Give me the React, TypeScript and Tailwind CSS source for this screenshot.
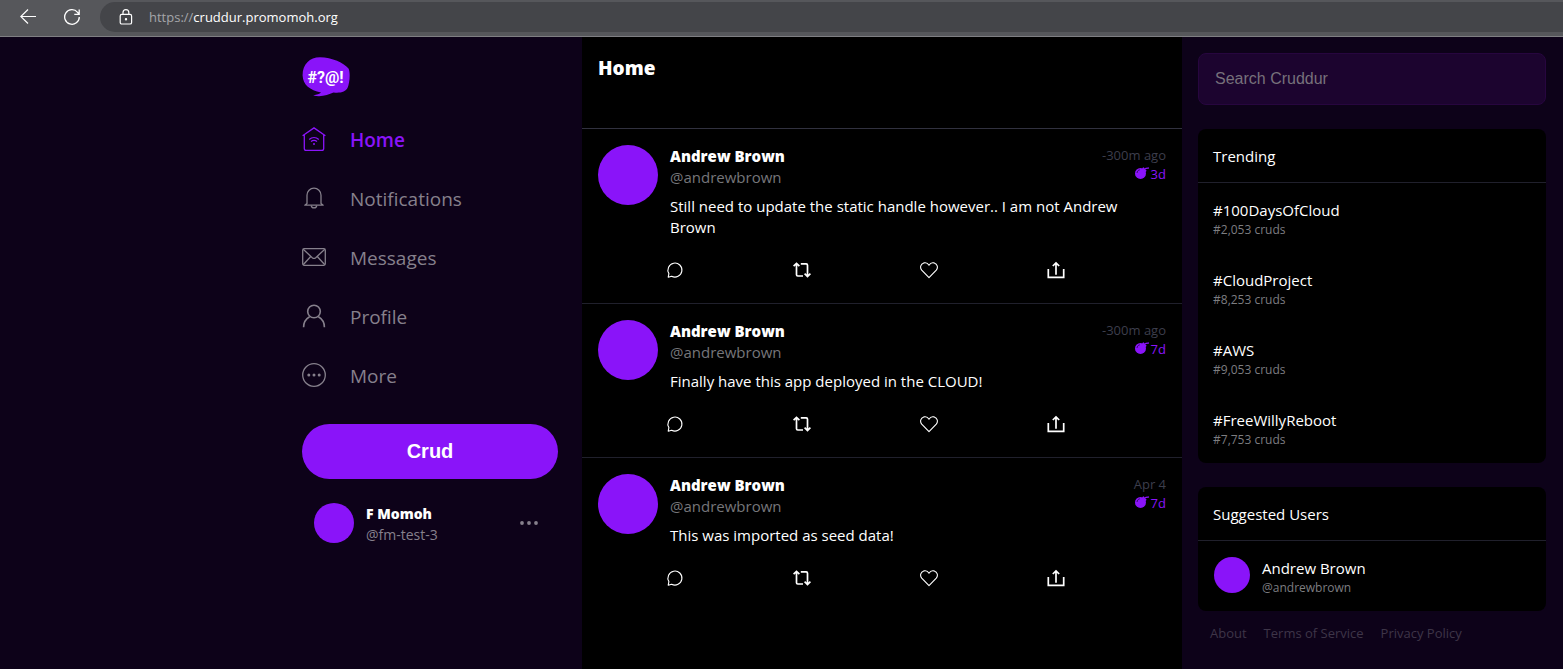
import type { ReactNode } from 'react';

const posts = [
  { id: 1, message: 'Still need to update the static handle however.. I am not Andrew Brown', ago: '-300m ago', expires: '3d' },
  { id: 2, message: 'Finally have this app deployed in the CLOUD!', ago: '-300m ago', expires: '7d' },
  { id: 3, message: 'This was imported as seed data!', ago: 'Apr 4', expires: '7d' },
];

const trends = [
  { tag: '#100DaysOfCloud', count: '2,053' },
  { tag: '#CloudProject', count: '8,253' },
  { tag: '#AWS', count: '9,053' },
  { tag: '#FreeWillyReboot', count: '7,753' },
];

function BrowserBar() {
  return (
    <header className="flex h-[37px] shrink-0 items-start border-b border-[#7f7f83] bg-[#56575b] pt-[2px] text-white">
      <button aria-label="Back" className="ml-5 mt-[7px]">
        <svg className="size-4" viewBox="0 0 16 16" fill="none" stroke="currentColor" strokeWidth="1.2">
          <path d="M16 7.5H.8M8 .5l-7.2 7L8 14.5" />
        </svg>
      </button>
      <button aria-label="Refresh" className="ml-7 mt-[7px]">
        <svg className="size-4" viewBox="0 0 16 16" fill="none" stroke="currentColor" strokeWidth="1.3">
          <path d="M15.3 8A7.3 7.3 0 1 1 13.6 3.3L15 5.2M15.2.5v4.9h-4.9" />
        </svg>
      </button>
      <div className="ml-5 flex h-[30px] flex-1 items-center rounded-l-full bg-[#444549] pl-[19px] text-[13px]">
        <svg className="h-4 w-[14px]" viewBox="0 0 14 16" fill="none" stroke="currentColor" strokeWidth="1.2">
          <rect x="1.2" y="5.4" width="11.4" height="9.6" rx="1.6" />
          <path d="M4 5.4V3.6a2.9 2.9 0 0 1 5.8 0v1.8" />
          <circle cx="7" cy="10.2" r=".6" fill="currentColor" />
        </svg>
        <span className="ml-4 pt-px text-[#a5a6a9]">
          https://<span className="text-white">cruddur.promomoh.org</span>
        </span>
      </div>
    </header>
  );
}

function Logo() {
  return (
    <svg className="h-10 w-12" viewBox="0 0 48 40" role="img" aria-label="Cruddur">
      <path
        d="M.6 18.500C.4 7.500 7.500.4 18 .3 30 .4 42 6 46.500 11.500 48.500 15 47.800 26 45.500 31 43.500 34.800 39 36.200 31.500 35.500 26 37.800 19 40.600 11.200 38.400 15 37.800 17.500 36.800 19 35.500 8 33 .9 28 .6 18.500Z"
        fill="#8a14f9"
      />
      <text x="23.500" y="25.500" textAnchor="middle" fill="white" className="font-['Roboto',sans-serif] text-[16px] font-bold">
        #?@!
      </text>
    </svg>
  );
}

const navIcons: Record<string, ReactNode> = {
  Home: (
    <>
      <path d="M.6 8.800 12 .9l11.400 7.900M2.300 8v13.400c0 1.200.7 1.900 1.900 1.900h15.600c1.200 0 1.900-.7 1.900-1.900V8" />
      <path d="M7.200 12.400c2.800-2.400 6.800-2.400 9.600 0M9 14.600c1.800-1.400 4.200-1.400 6 0" />
      <circle cx="12" cy="17" r="1" fill="currentColor" stroke="none" />
    </>
  ),
  Notifications: (
    <>
      <path d="M5 17.500V9.200a7 7 0 0 1 14 0v8.300l2.200 1.700H2.800L5 17.500Z" strokeLinejoin="round" />
      <path d="M9.300 19.400c0 3.300 5.400 3.300 5.400 0" />
    </>
  ),
  Messages: (
    <>
      <rect x=".7" y="3.700" width="22.600" height="16.600" rx="1.500" />
      <path d="m1.200 4.300 9.100 8.400c1.200 1 2.200 1 3.400 0l9.100-8.400M1.200 19.700l7.300-8M22.800 19.700l-7.300-8" />
    </>
  ),
  Profile: (
    <>
      <circle cx="12" cy="7.500" r="6.300" strokeWidth="1.600" />
      <path d="M1.600 23.200c0-4.700 2.400-8.300 6-10.400M22.400 23.200c0-4.700-2.400-8.300-6-10.400" strokeWidth="1.600" />
    </>
  ),
  More: (
    <>
      <circle cx="12" cy="12" r="11.300" />
      <g fill="currentColor" stroke="none">
        <circle cx="6.800" cy="12" r="1.500" />
        <circle cx="12" cy="12" r="1.500" />
        <circle cx="17.200" cy="12" r="1.500" />
      </g>
    </>
  ),
};

function Sidebar() {
  return (
    <aside className="flex flex-1 justify-end pr-6">
      <div className="w-64 pt-5">
        <Logo />
        <nav className="mt-[14px]">
          {Object.entries(navIcons).map(([label, icon]) => (
            <a
              key={label}
              href="#"
              className={`flex h-[59px] items-center gap-6 text-[19px] ${label === 'Home' ? 'font-semibold text-[#8a14f9]' : 'text-[#86808c]'}`}
            >
              <svg className="mb-[3px] size-6" viewBox="0 0 24 24" fill="none" stroke="currentColor" strokeWidth="1.300">
                {icon}
              </svg>
              {label}
            </a>
          ))}
        </nav>
        <button className="mt-[18px] h-[55px] w-full rounded-full bg-[#8a14f9] pb-[2px] font-['Liberation_Sans',sans-serif] text-xl font-bold text-white">
          Crud
        </button>
        <div className="mt-6 flex items-start pl-3 pr-5">
          <div className="size-10 rounded-full bg-[#8a14f9]" />
          <div className="ml-3 flex-1 text-sm leading-[21px]">
            <div className="font-extrabold text-white">F Momoh</div>
            <div className="text-[#86808c]">@fm-test-3</div>
          </div>
          <button aria-label="Account options" className="flex h-10 items-center text-[#86808c]">
            <svg className="h-1 w-[18px]" viewBox="0 0 18 4" fill="currentColor">
              <circle cx="2" cy="2" r="1.900" />
              <circle cx="9" cy="2" r="1.900" />
              <circle cx="16" cy="2" r="1.900" />
            </svg>
          </button>
        </div>
      </div>
    </aside>
  );
}

const actions: { label: string; icon: ReactNode }[] = [
  {
    label: 'Reply',
    icon: <path d="M2.200 16.200 2.900 12.600A7 7 0 1 1 5.600 15.200Z" strokeWidth="1.100" strokeLinejoin="round" />,
  },
  {
    label: 'Repost',
    icon: <path d="M.6 5.200 3.500 2.400 6.400 5.200M3.500 2.700v11c0 .9.500 1.300 1.300 1.300H10M17.400 12.700l-2.900 2.800-2.900-2.800M14.500 15.100V4.200c0-.9-.5-1.300-1.300-1.300H7.800" strokeWidth="1.700" />,
  },
  {
    label: 'Like',
    icon: <path d="M9 16.700 1.700 9.200C-.4 6.600.7 2.900 3.800 1.900 6 1.300 7.900 2.200 9 4.200c1.100-2 3-2.900 5.200-2.300 3.100 1 4.200 4.700 2.100 7.300Z" strokeWidth="1.100" strokeLinejoin="round" />,
  },
  {
    label: 'Share',
    icon: <path d="M1.300 8v8.300h15.400V8M9 13.800V2.200M5.800 5 9 1.900 12.200 5" strokeWidth="1.700" />,
  },
];

function Bomb() {
  return (
    <svg className="mb-1 h-3 w-[14px]" viewBox="0 0 14 12" fill="none">
      <circle cx="5.500" cy="6.400" r="5.500" fill="#8a14f9" />
      <path d="M7 1.300 8.600.2l2.900 3.200-.7 1.800Z" fill="#8a14f9" />
      <path d="M10 1.900c1-1 2.200-.8 3.900-.9" stroke="#8a14f9" strokeWidth="1.300" />
      <path d="M2 6c.3-1.800 1.200-2.800 2.800-3.200" stroke="#30075a" strokeWidth=".9" />
    </svg>
  );
}

function Post({ message, ago, expires }: { message: string; ago: string; expires: string }) {
  return (
    <article className="flex gap-3 border-b border-[#20202c] p-4 last:border-b-0">
      <div className="size-[60px] shrink-0 rounded-full bg-[#8a14f9]" />
      <div className="min-w-0 flex-1 pt-px text-[15px] leading-[21px]">
        <div className="flex justify-between">
          <div>
            <div className="font-extrabold text-white">Andrew Brown</div>
            <div className="text-[#76767a]">@andrewbrown</div>
          </div>
          <div className="text-right text-[13px] leading-[19px]">
            <div className="text-[#3d3e4c]">{ago}</div>
            <div className="flex items-center justify-end gap-[2px] text-[#8a14f9]">
              <Bomb />
              {expires}
            </div>
          </div>
        </div>
        <p className="mt-2 text-white">{message}</p>
        <div className="-ml-3 mt-[15px] grid grid-cols-4 text-white">
          {actions.map(({ label, icon }) => (
            <button key={label} aria-label={label} className="p-2">
              <svg className="size-[18px]" viewBox="0 0 18 18" fill="none" stroke="currentColor">
                {icon}
              </svg>
            </button>
          ))}
        </div>
      </div>
    </article>
  );
}

function Panel({ title, children }: { title: string; children: ReactNode }) {
  return (
    <section className="mt-6 rounded-lg bg-black text-[15px] text-white">
      <h2 className="border-b border-[#20202c] px-[15px] pb-[15px] pt-[17px] leading-[21px]">{title}</h2>
      {children}
    </section>
  );
}

function RightRail() {
  return (
    <aside className="w-[381px] shrink-0 py-4 pl-4 pr-[17px]">
      <input
        type="search"
        aria-label="Search Cruddur"
        placeholder="Search Cruddur"
        className="block h-[52px] w-full rounded-lg border border-[#27063f] bg-[#1c042f] px-4 font-['Liberation_Sans',sans-serif] text-base text-white outline-none placeholder:text-[#77717b]"
      />
      <Panel title="Trending">
        {trends.map(({ tag, count }) => (
          <a key={tag} href="#" className="block h-[70px] px-[15px] pt-[17px]">
            <span className="block leading-[21px]">{tag}</span>
            <span className="block text-xs leading-[17px] text-[#7d7d80]">#{count} cruds</span>
          </a>
        ))}
      </Panel>
      <Panel title="Suggested Users">
        <div className="flex h-[70px] gap-3 px-4 pt-4">
          <div className="size-9 rounded-full bg-[#8a14f9]" />
          <div className="pt-px">
            <div className="leading-[21px]">Andrew Brown</div>
            <div className="text-xs leading-[17px] text-[#7d7d80]">@andrewbrown</div>
          </div>
        </div>
      </Panel>
      <footer className="mt-3 flex gap-[17px] px-3 text-[13px] leading-5 text-[#3e3548]">
        <a href="#">About</a>
        <a href="#">Terms of Service</a>
        <a href="#">Privacy Policy</a>
      </footer>
    </aside>
  );
}

export default function App() {
  return (
    <div className="flex min-h-screen flex-col bg-[#0d0219] font-['Open_Sans',sans-serif]">
      <BrowserBar />
      <div className="flex flex-1">
        <Sidebar />
        <main className="w-[600px] shrink-0 bg-black">
          <div className="h-[92px] border-b border-[#31313f] px-4 pt-4">
            <h1 className="text-[19px] font-extrabold leading-[30px] text-white">Home</h1>
          </div>
          <div>
            {posts.map((post) => (
              <Post key={post.id} message={post.message} ago={post.ago} expires={post.expires} />
            ))}
          </div>
        </main>
        <RightRail />
      </div>
    </div>
  );
}
